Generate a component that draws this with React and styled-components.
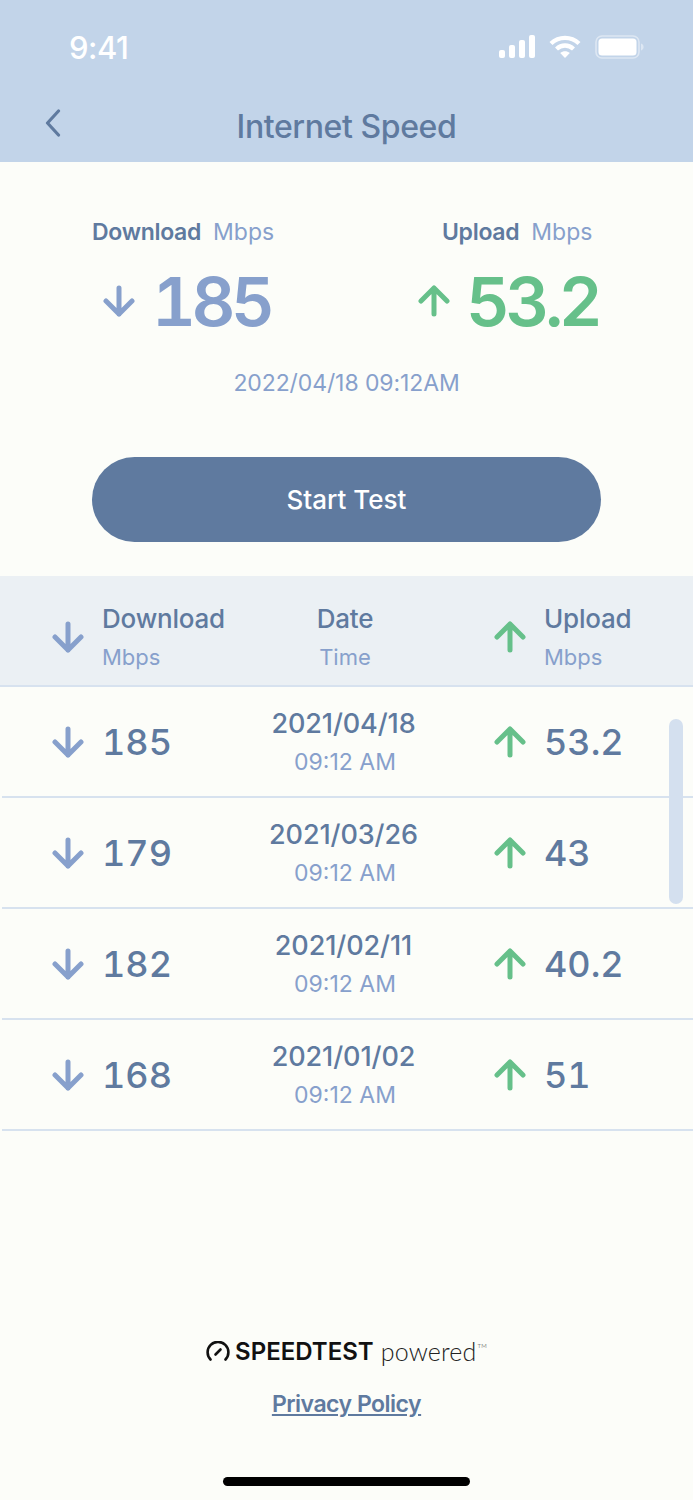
import React from "react";
import styled, { createGlobalStyle } from "styled-components";

const GlobalStyle = createGlobalStyle`
  html, body {
    margin: 0;
    padding: 0;
    background: #fcfdf9;
  }
  body {
    font-family: Inter, "Liberation Sans", sans-serif;
  }
`;

const Page = styled.div`
  width: 693px;
  height: 1500px;
  display: flex;
  flex-direction: column;
  overflow: hidden;
  background: #fcfdf9;
`;

const Header = styled.header`
  height: 162px;
  flex: none;
  display: flex;
  flex-direction: column;
  background: #c2d4e9;
`;

const StatusBar = styled.div`
  height: 94px;
  padding: 0 49px 0 69px;
  display: flex;
  align-items: center;
  justify-content: space-between;
`;

const Clock = styled.span`
  font-size: 31px;
  font-weight: 500;
  letter-spacing: -0.5px;
  color: #ffffff;
`;

const StatusIcons = styled.div`
  display: flex;
  align-items: center;
  gap: 14px;
`;

const NavBar = styled.div`
  height: 68px;
  display: grid;
  grid-template-columns: 1fr auto 1fr;
  align-items: center;
`;

const BackButton = styled.div`
  padding: 0 0 10px 45px;
  display: flex;
`;

const NavTitle = styled.h1`
  margin: 0;
  padding-bottom: 3px;
  font-size: 32px;
  font-weight: 500;
  letter-spacing: -0.4px;
  color: #5f7a9f;
`;

const Hero = styled.section`
  height: 414px;
  flex: none;
  display: flex;
  flex-direction: column;
  padding-top: 55px;
  box-sizing: border-box;
`;

const LabelRow = styled.div`
  display: grid;
  grid-template-columns: 350px 1fr;
  padding-left: 92px;
  height: 30px;
  align-items: center;
`;

const LabelGroup = styled.div`
  display: flex;
  gap: 12px;
  font-size: 23px;
`;

const LabelName = styled.span`
  font-weight: 600;
  letter-spacing: -0.3px;
  color: #5f7a9f;
`;

const LabelUnit = styled.span`
  color: #87a0cc;
`;

const ValueRow = styled.div`
  display: grid;
  grid-template-columns: 315px 1fr;
  padding-left: 103px;
  margin-top: 13px;
  height: 82px;
  align-items: center;
`;

const ValueGroup = styled.div`
  display: flex;
  align-items: center;
  gap: ${(p) => p.$gap}px;
`;

const BigNumber = styled.span`
  font-size: 68px;
  font-weight: 600;
  letter-spacing: -4.5px;
  font-feature-settings: "tnum";
  color: ${(p) => p.$color};
`;

const Stamp = styled.div`
  margin-top: 27px;
  text-align: center;
  font-size: 23px;
  letter-spacing: -0.1px;
  color: #87a0cc;
`;

const StartButton = styled.button`
  align-self: center;
  width: 509px;
  height: 85px;
  margin-top: 60px;
  border: none;
  border-radius: 43px;
  background: #5f7a9f;
  color: #ffffff;
  font-family: inherit;
  font-size: 26px;
  font-weight: 500;
`;

const Table = styled.section`
  position: relative;
  flex: none;
`;

const Row = styled.div`
  height: 111px;
  box-sizing: border-box;
  margin-left: ${(p) => (p.$head ? 0 : 2)}px;
  padding-left: ${(p) => (p.$head ? 52 : 50)}px;
  padding-top: ${(p) => (p.$head ? 12 : 0)}px;
  display: grid;
  grid-template-columns: 205px 176px 1fr;
  align-items: center;
  background: ${(p) => (p.$head ? "#ebf0f4" : "transparent")};
  border-bottom: 2px solid #d7e2ef;
`;

const Metric = styled.div`
  display: flex;
  align-items: center;
  gap: 18px;
  padding-left: ${(p) => (p.$up ? 61 : 0)}px;
`;

const Stack = styled.div`
  display: flex;
  flex-direction: column;
  gap: 9px;
  align-items: ${(p) => (p.$center ? "center" : "flex-start")};
`;

const HeadTitle = styled.span`
  font-size: 26px;
  font-weight: 500;
  line-height: 31px;
  letter-spacing: -0.2px;
  color: #5f7a9f;
`;

const HeadUnit = styled.span`
  font-size: 22px;
  line-height: 28px;
  color: #87a0cc;
`;

const RowNumber = styled.span`
  font-size: 36px;
  font-weight: 500;
  font-feature-settings: "tnum";
  color: #5f7a9f;
`;

const RowDate = styled.span`
  font-size: 27px;
  font-weight: 500;
  line-height: 31px;
  letter-spacing: -0.1px;
  color: #5f7a9f;
  transform: translateX(-1.5px);
`;

const RowTime = styled.span`
  font-size: 23px;
  line-height: 28px;
  color: #87a0cc;
`;

const ScrollThumb = styled.div`
  position: absolute;
  top: 143px;
  right: 10px;
  width: 14px;
  height: 185px;
  border-radius: 7px;
  background: #d4e0ef;
`;

const Footer = styled.footer`
  flex: 1;
  display: flex;
  flex-direction: column;
  align-items: center;
  justify-content: flex-end;
`;

const Brand = styled.div`
  display: flex;
  align-items: center;
  gap: 5px;
  color: #111111;
`;

const BrandName = styled.span`
  font-size: 24px;
  font-weight: 600;
`;

const BrandSuffix = styled.span`
  margin-left: 2px;
  font-family: Lato, sans-serif;
  font-size: 25px;
  font-weight: 300;
  letter-spacing: 0.2px;
  color: #222222;
`;

const Trademark = styled.sup`
  font-size: 6px;
  margin-left: 1px;
  vertical-align: 13px;
`;

const PrivacyLink = styled.a`
  margin-top: 24px;
  font-size: 23px;
  font-weight: 600;
  letter-spacing: -0.5px;
  color: #5f7a9f;
  text-decoration: underline;
`;

const HomeBar = styled.div`
  width: 247px;
  height: 9px;
  margin: 59px 0 14px;
  border-radius: 5px;
  background: #000000;
`;

const DownArrow = ({ size = 32 }) => (
  <svg width={size} height={size} viewBox="0 0 32 32" fill="none" stroke="#87a0cc" strokeWidth="5" strokeLinecap="round" strokeLinejoin="round">
    <path d="M16 3v26M3 16l13 13 13-13" />
  </svg>
);

const UpArrow = ({ size = 32 }) => (
  <svg width={size} height={size} viewBox="0 0 32 32" fill="none" stroke="#66c08a" strokeWidth="5" strokeLinecap="round" strokeLinejoin="round">
    <path d="M16 29V3M3 16L16 3l13 13" />
  </svg>
);

const SignalIcon = () => (
  <svg width="36" height="24" viewBox="0 0 36 24" fill="#ffffff">
    <rect x="0" y="15" width="6" height="8" rx="2" />
    <rect x="10" y="10" width="6" height="13" rx="2" />
    <rect x="20" y="5" width="6" height="18" rx="2" />
    <rect x="30" y="0" width="6" height="23" rx="2" />
  </svg>
);

const WifiIcon = () => (
  <svg width="32" height="24" viewBox="0 0 32 24" fill="none" stroke="#ffffff" strokeWidth="4.4">
    <path d="M2 8.5c8-7.5 20-7.5 28 0" />
    <path d="M7.5 14c5-4.6 12-4.6 17 0" />
    <path d="M16 23l-4.8-5c2.8-2.2 6.8-2.2 9.6 0z" fill="#ffffff" stroke="none" />
  </svg>
);

const BatteryIcon = () => (
  <svg width="49" height="24" viewBox="0 0 49 24" fill="none">
    <rect x="1" y="1" width="43" height="22" rx="6" stroke="#ffffff" strokeOpacity="0.45" strokeWidth="1.6" />
    <rect x="3.5" y="3.5" width="38" height="17" rx="3.5" fill="#ffffff" />
    <path d="M46 8.5c1.6.6 2.6 1.9 2.6 3.5s-1 2.9-2.6 3.5z" fill="#ffffff" fillOpacity="0.45" />
  </svg>
);

const BackIcon = () => (
  <svg width="16" height="28" viewBox="0 0 16 28" fill="none" stroke="#5f7a9f" strokeWidth="3.2" strokeLinecap="round" strokeLinejoin="round">
    <path d="M13.5 2L2.5 14l11 12" />
  </svg>
);

const GaugeIcon = () => (
  <svg width="24" height="20" viewBox="0 0 24 20" fill="none" stroke="#111111" strokeWidth="2.6" strokeLinecap="round">
    <path d="M4.5 18.5a10.4 10.4 0 1 1 15 0" />
    <path d="M9.5 13.5l5-5" />
  </svg>
);

const results = [
  { down: "185", date: "2021/04/18", up: "53.2" },
  { down: "179", date: "2021/03/26", up: "43" },
  { down: "182", date: "2021/02/11", up: "40.2" },
  { down: "168", date: "2021/01/02", up: "51" },
];

const App = () => {
  return (
    <Page>
      <GlobalStyle />
      <Header>
        <StatusBar>
          <Clock>9:41</Clock>
          <StatusIcons>
            <SignalIcon />
            <WifiIcon />
            <BatteryIcon />
          </StatusIcons>
        </StatusBar>
        <NavBar>
          <BackButton>
            <BackIcon />
          </BackButton>
          <NavTitle>Internet Speed</NavTitle>
        </NavBar>
      </Header>

      <Hero>
        <LabelRow>
          <LabelGroup>
            <LabelName>Download</LabelName>
            <LabelUnit>Mbps</LabelUnit>
          </LabelGroup>
          <LabelGroup>
            <LabelName>Upload</LabelName>
            <LabelUnit>Mbps</LabelUnit>
          </LabelGroup>
        </LabelRow>
        <ValueRow>
          <ValueGroup $gap={17}>
            <DownArrow />
            <BigNumber $color="#87a0cc">185</BigNumber>
          </ValueGroup>
          <ValueGroup $gap={16}>
            <UpArrow />
            <BigNumber $color="#66c08a">53.2</BigNumber>
          </ValueGroup>
        </ValueRow>
        <Stamp>2022/04/18 09:12AM</Stamp>
        <StartButton>Start Test</StartButton>
      </Hero>

      <Table>
        <Row $head>
          <Metric>
            <DownArrow />
            <Stack>
              <HeadTitle>Download</HeadTitle>
              <HeadUnit>Mbps</HeadUnit>
            </Stack>
          </Metric>
          <Stack $center>
            <HeadTitle>Date</HeadTitle>
            <HeadUnit>Time</HeadUnit>
          </Stack>
          <Metric $up>
            <UpArrow />
            <Stack>
              <HeadTitle>Upload</HeadTitle>
              <HeadUnit>Mbps</HeadUnit>
            </Stack>
          </Metric>
        </Row>
        {results.map((r) => (
          <Row key={r.date}>
            <Metric>
              <DownArrow />
              <RowNumber>{r.down}</RowNumber>
            </Metric>
            <Stack $center>
              <RowDate>{r.date}</RowDate>
              <RowTime>09:12 AM</RowTime>
            </Stack>
            <Metric $up>
              <UpArrow />
              <RowNumber>{r.up}</RowNumber>
            </Metric>
          </Row>
        ))}
        <ScrollThumb />
      </Table>

      <Footer>
        <Brand>
          <GaugeIcon />
          <BrandName>SPEEDTEST</BrandName>
          <BrandSuffix>
            powered<Trademark>TM</Trademark>
          </BrandSuffix>
        </Brand>
        <PrivacyLink>Privacy Policy</PrivacyLink>
        <HomeBar />
      </Footer>
    </Page>
  );
};

export default App;
